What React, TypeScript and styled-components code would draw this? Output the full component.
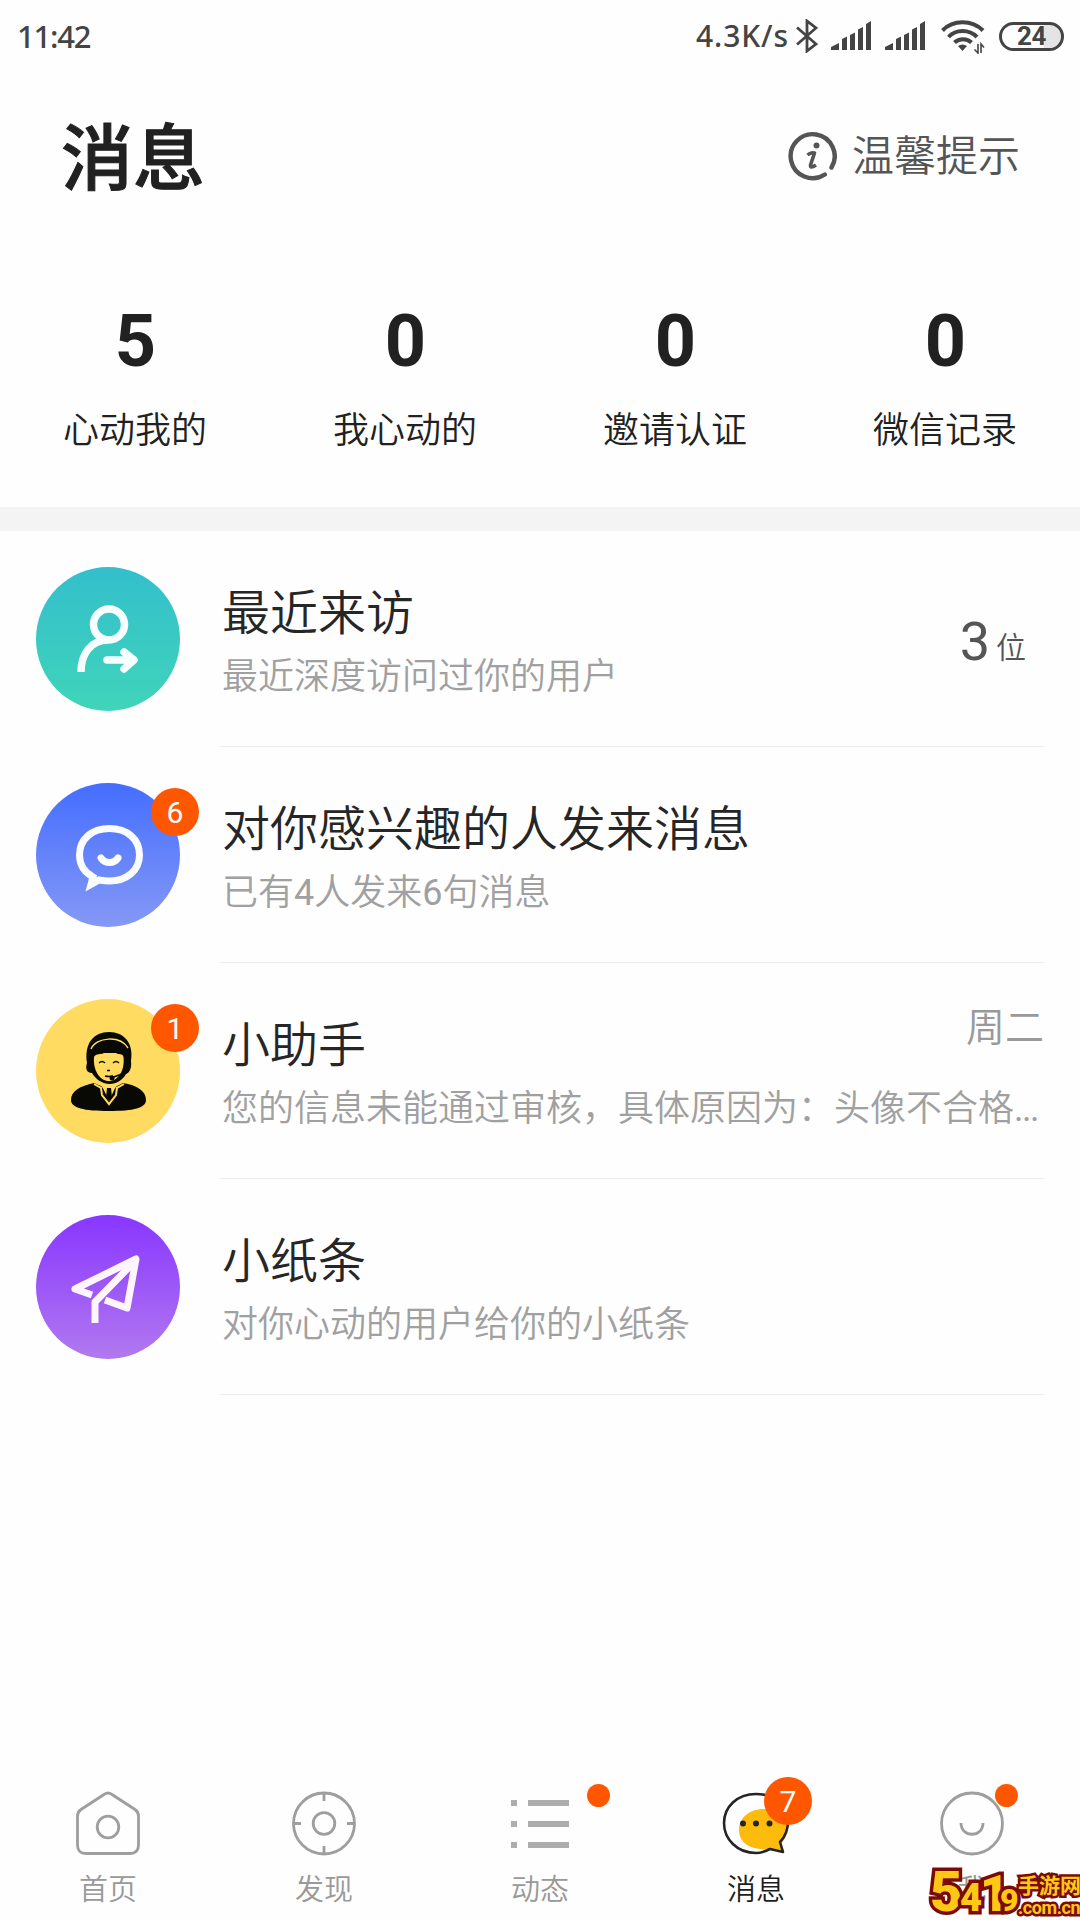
import React from "react";
import styled, { createGlobalStyle } from "styled-components";

const Global = createGlobalStyle`
  * { box-sizing: border-box; }
  body { margin: 0; background: #fefefe; }
`;

const Page = styled.div`
  width: 1080px;
  height: 1920px;
  display: flex;
  flex-direction: column;
  background: #fefefe;
  overflow: hidden;
  font-family: Roboto, "Noto Sans CJK SC", sans-serif;
  color: #212121;
`;

const StatusBar = styled.div`
  height: 72px;
  flex: none;
  display: flex;
  align-items: center;
  justify-content: space-between;
  padding: 0 16px 0 17px;
  color: #444;
  font: 500 31px/72px "Noto Sans", sans-serif;
`;
const Clock = styled.span`
  letter-spacing: -1.2px;
`;
const StatusRight = styled.div`
  display: flex;
  align-items: center;
  height: 72px;
`;
const Speed = styled.span`
  font-size: 30px;
  letter-spacing: 0.9px;
  margin-right: 7px;
`;
const StatusIcon = styled.svg<{ $gap?: number }>`
  display: block;
  margin-right: ${(p) => p.$gap ?? 0}px;
`;
const Battery = styled.div`
  width: 65px;
  height: 29px;
  border: 3px solid #444;
  border-radius: 15px;
  background: linear-gradient(90deg, #fefefe 72%, #e4e4e4 72%);
  display: flex;
  align-items: center;
  justify-content: center;
  font: 700 26px/24px Roboto, sans-serif;
  letter-spacing: -0.5px;
`;

const Header = styled.header`
  height: 168px;
  flex: none;
  display: flex;
  align-items: flex-start;
  justify-content: space-between;
  padding: 0 60px 0 61px;
`;
const Title = styled.h1`
  margin: 0;
  font: 500 72px/162px "Noto Sans CJK SC", sans-serif;
  -webkit-text-stroke: 1px #212121;
`;
const Tip = styled.div`
  display: flex;
  align-items: center;
  gap: 15px;
  height: 168px;
  font: 400 42px/60px "Noto Sans CJK SC", sans-serif;
  color: #555;
`;
const TipLabel = styled.span`
  padding-bottom: 6px;
  font-weight: 350;
`;

const Stats = styled.section`
  height: 267px;
  flex: none;
  display: grid;
  grid-template-columns: repeat(4, 1fr);
  padding-top: 60px;
`;
const Stat = styled.div`
  display: flex;
  flex-direction: column;
  align-items: center;
`;
const StatValue = styled.div`
  padding-left: 1px;
  font: 700 72px/84px Roboto, sans-serif;
`;
const StatLabel = styled.div`
  margin-top: 17px;
  font: 350 36px/52px "Noto Sans CJK SC", sans-serif;
`;
const Band = styled.div`
  height: 24px;
  flex: none;
  background: #f4f4f4;
`;

const List = styled.main`
  flex: 1;
`;
const Row = styled.div`
  height: 216px;
  display: flex;
  padding-left: 36px;
  padding-right: 36px;
`;
const Avatar = styled.div<{ $bg: string }>`
  position: relative;
  width: 144px;
  height: 144px;
  margin-top: 36px;
  border-radius: 50%;
  background: ${(p) => p.$bg};
  flex: none;
`;
const Badge = styled.span<{ $x: number; $y: number }>`
  position: absolute;
  left: ${(p) => p.$x}px;
  top: ${(p) => p.$y}px;
  width: 48px;
  height: 48px;
  border-radius: 50%;
  background: #ff5700;
  color: #fff;
  text-align: center;
  font: 400 30px/50px Roboto, sans-serif;
`;
const RowBody = styled.div`
  flex: 1;
  min-width: 0;
  margin-left: 40px;
  display: flex;
  border-bottom: 1px solid #ececec;
`;
const RowText = styled.div`
  flex: 1;
  min-width: 0;
  padding: 43px 6px 0 2px;
`;
const RowTitle = styled.div`
  font: 350 48px/70px "Noto Sans CJK SC", sans-serif;
  color: #262626;
`;
const RowSub = styled.div`
  margin-top: 3px;
  font: 350 36px/52px "Noto Sans CJK SC", sans-serif;
  color: #a0a0a0;
  white-space: nowrap;
`;
const Latin = styled.span<{ $spacing?: number }>`
  font-family: Roboto, sans-serif;
  font-weight: 400;
  letter-spacing: ${(p) => p.$spacing ?? 0}px;
`;
const Count = styled.div`
  padding: 75px 18px 0 0;
  font: 400 54px/72px Roboto, sans-serif;
  color: #555;
`;
const Unit = styled.span`
  margin-left: 6px;
  vertical-align: 2px;
  font: 350 30px/30px "Noto Sans CJK SC", sans-serif;
`;
const DayLine = styled.div`
  display: flex;
  justify-content: space-between;
`;
const Day = styled.span`
  margin: -12px -6px 0 0;
  font: 350 39px/60px "Noto Sans CJK SC", sans-serif;
  color: #999;
`;

const TabBar = styled.nav`
  position: relative;
  height: 156px;
  flex: none;
  display: grid;
  grid-template-columns: repeat(5, 1fr);
`;
const Tab = styled.div<{ $active?: boolean }>`
  position: relative;
  display: flex;
  flex-direction: column;
  align-items: center;
  padding-top: 20px;
  font: 350 29px/42px "Noto Sans CJK SC", sans-serif;
  color: ${(p) => (p.$active ? "#1c1c1c" : "#999")};
`;
const TabIcon = styled.svg`
  display: block;
  margin-bottom: 10px;
`;
const Dot = styled.i<{ $x: number }>`
  position: absolute;
  left: ${(p) => p.$x}px;
  top: 20px;
  width: 23px;
  height: 23px;
  border-radius: 50%;
  background: #ff5700;
`;

const Watermark = styled.div`
  position: absolute;
  right: 0;
  bottom: 0;
  width: 150px;
  height: 56px;
  display: flex;
  color: #ffc814;
  -webkit-text-stroke: 7px #7b0b08;
  paint-order: stroke fill;
  font-family: Roboto, "Noto Sans CJK SC", sans-serif;
  font-weight: 900;
  white-space: nowrap;
`;
const MarkNumber = styled.div`
  width: 88px;
  display: flex;
  align-items: baseline;
`;
const Digit = styled.span<{ $size: number; $w: number }>`
  width: ${(p) => p.$w}px;
  font-size: ${(p) => p.$size}px;
  line-height: 1;
`;
const MarkText = styled.div`
  display: flex;
  flex-direction: column;
  padding-top: 10px;
  -webkit-text-stroke-width: 5px;
  font-size: 21px;
  font-weight: 700;
  line-height: 24px;
`;
const MarkDomain = styled.span`
  font-size: 18px;
  line-height: 20px;
  letter-spacing: -0.4px;
`;

const Signal = ({ gap }: { gap: number }) => (
  <StatusIcon width="41" height="30" viewBox="0 0 41 30" fill="#444" $gap={gap}>
    <path d="M0 29v-3l8-4v7zM11 29V18l5-2.5V29zM19 29V14l5-2.5V29zM27 29V8.500l5-2.500V29zM35 29V3l5-3v29z" />
  </StatusIcon>
);

const VisitorIcon = () => (
  <svg width="144" height="144" viewBox="0 0 144 144" fill="none" stroke="#f6fffd" strokeWidth="7.500">
    <circle cx="73" cy="57.500" r="15.500" />
    <path d="M45 105C45 87 55 73 72 73" strokeLinecap="butt" />
    <path d="M71 93H97M88 85L98 93L88 102" strokeLinecap="round" strokeLinejoin="round" />
  </svg>
);
const ChatIcon = () => (
  <svg width="144" height="144" viewBox="0 0 144 144" fill="none" stroke="#fafcff" strokeWidth="7">
    <path d="M55 101.500L57 94C48 89 43.500 82 43.500 72C43.500 56 56 45.500 73.500 45.500S103.500 56 103.500 72S90 98 73.500 98C69 98 66 97.500 63 97Z" />
    <path d="M65 75C69 81 78 81 82 75" strokeLinecap="round" />
  </svg>
);
const AgentIcon = () => (
  <svg width="144" height="144" viewBox="0 0 144 144" fill="#080804">
    <path d="M51 64C48 44 58 33 73 33S98 44 95 62C96 70 93 74 90 75C87 81 80 85 74 85C65 85 59 79 56 74C51 74 49 70 51 64Z" />
    <path d="M58 58C60 54 65 56 68 54H80C82 56 87 54 87.500 58C89 72 82 82 73 82S57 72 58 58Z" fill="#ffdb5f" />
    <path d="M55 50C60 38 84 36 92 49" fill="none" stroke="#ffdb5f" strokeWidth="1.500" />
    <path d="M63 64Q66 61 69 64M77 64Q80 61 83 64M71 71.500H74M69 77Q73 78 77 77" fill="none" stroke="#080804" strokeWidth="1.300" />
    <path d="M75 79L86 75" stroke="#080804" strokeWidth="1.800" />
    <circle cx="76" cy="79" r="2.500" />
    <path d="M58 84C44 87 35 92 35 101C35 109 48 112 73 112S110 109 110 101C110 92 101 86 87 84L81 87L73 95L65 87Z" />
    <path d="M58 85L65 89L66 96L73 105L80 96L81 89L88 85" fill="none" stroke="#ffdb5f" strokeWidth="2" />
    <path d="M66 87H80L73 102Z" fill="#ffdb5f" />
    <path d="M71 89H75L76 98L73 102L70 98Z" />
  </svg>
);
const PlaneIcon = () => (
  <svg width="144" height="144" viewBox="0 0 144 144" fill="none" stroke="#fff5ff" strokeWidth="7" strokeLinejoin="round">
    <path d="M56 80L39 74L100 44L91 93L69 85" />
    <path d="M59 108V87L98 47" />
  </svg>
);

const stats = [
  ["5", "心动我的"],
  ["0", "我心动的"],
  ["0", "邀请认证"],
  ["0", "微信记录"],
];

export default function App() {
  return (
    <Page>
      <Global />
      <StatusBar>
        <Clock>11:42</Clock>
        <StatusRight>
          <Speed>4.3K/s</Speed>
          <StatusIcon width="22" height="34" viewBox="0 0 22 34" fill="none" stroke="#444" strokeWidth="2.800" $gap={13}>
            <path d="M1 8.500L20 25L11 32V2L20 9L1 25.500" />
          </StatusIcon>
          <Signal gap={13} />
          <Signal gap={15} />
          <StatusIcon width="44" height="36" viewBox="0 0 44 36" fill="none" stroke="#444" strokeWidth="4" $gap={14}>
            <path d="M1.500 12.500C12 1.500 31 1.500 42 12.500M7.500 19C15 11 28 11 36 19M13.500 24.500C18 20 26 20 30.500 24.500" />
            <path d="M17 28Q21.500 25 26 28L21.500 33Z" fill="#444" stroke="none" />
            <path d="M37 26V35L33.500 31.500M40 35V26L43 29.500" strokeWidth="1.600" />
          </StatusIcon>
          <Battery>24</Battery>
        </StatusRight>
      </StatusBar>

      <Header>
        <Title>消息</Title>
        <Tip>
          <svg width="50" height="50" viewBox="0 0 50 50" fill="none" stroke="#555" strokeWidth="4.400">
            <path d="M37.800 43.500A22 22 0 1 1 44.500 36.500" strokeLinecap="round" />
            <circle cx="29.500" cy="14.500" r="3" fill="#555" stroke="none" />
            <path d="M20.500 24Q24 21 27.500 22L23.500 34Q23 38 29 34" strokeWidth="3.600" strokeLinejoin="round" />
          </svg>
          <TipLabel>温馨提示</TipLabel>
        </Tip>
      </Header>

      <Stats>
        {stats.map(([value, label]) => (
          <Stat key={label}>
            <StatValue>{value}</StatValue>
            <StatLabel>{label}</StatLabel>
          </Stat>
        ))}
      </Stats>
      <Band />

      <List>
        <Row>
          <Avatar $bg="linear-gradient(#33bfcc, #40d4ba)"><VisitorIcon /></Avatar>
          <RowBody>
            <RowText>
              <RowTitle>最近来访</RowTitle>
              <RowSub>最近深度访问过你的用户</RowSub>
            </RowText>
            <Count>3<Unit>位</Unit></Count>
          </RowBody>
        </Row>
        <Row>
          <Avatar $bg="linear-gradient(#446eff, #8598f5)">
            <ChatIcon />
            <Badge $x={115} $y={5}>6</Badge>
          </Avatar>
          <RowBody>
            <RowText>
              <RowTitle>对你感兴趣的人发来消息</RowTitle>
              <RowSub>已有<Latin>4</Latin>人发来<Latin>6</Latin>句消息</RowSub>
            </RowText>
          </RowBody>
        </Row>
        <Row>
          <Avatar $bg="#ffdb62">
            <AgentIcon />
            <Badge $x={115} $y={5}>1</Badge>
          </Avatar>
          <RowBody>
            <RowText>
              <DayLine>
                <RowTitle>小助手</RowTitle>
                <Day>周二</Day>
              </DayLine>
              <RowSub>您的信息未能通过审核，具体原因为：头像不合格<Latin $spacing={-1.5}>...</Latin></RowSub>
            </RowText>
          </RowBody>
        </Row>
        <Row>
          <Avatar $bg="linear-gradient(#8836ff, #b179ef)"><PlaneIcon /></Avatar>
          <RowBody>
            <RowText>
              <RowTitle>小纸条</RowTitle>
              <RowSub>对你心动的用户给你的小纸条</RowSub>
            </RowText>
          </RowBody>
        </Row>
      </List>

      <TabBar>
        <Tab>
          <TabIcon width="72" height="72" viewBox="0 0 72 72" fill="none" stroke="#9e9e9e" strokeWidth="2.800">
            <path d="M32 10.500Q36 7.500 40 10.500L63 25.500Q66.500 28 66.500 32V61Q66.500 69.500 58 69.500H14Q5.500 69.500 5.500 61V32Q5.500 28 9 25.500Z" />
            <circle cx="36" cy="43" r="10.800" />
          </TabIcon>
          首页
        </Tab>
        <Tab>
          <TabIcon width="72" height="72" viewBox="0 0 72 72" fill="none" stroke="#9e9e9e" strokeWidth="2.800">
            <circle cx="36" cy="39.500" r="30.500" />
            <circle cx="36" cy="39.500" r="10.800" />
            <path d="M36 9V17M36 62V70M5 39.500H13M59 39.500H67" />
          </TabIcon>
          发现
        </Tab>
        <Tab>
          <TabIcon width="72" height="72" viewBox="0 0 72 72" fill="#adadad">
            <path d="M7 16h6v6H7zM24 16h41v6H24zM7 37h6v6H7zM24 37h41v6H24zM7 58h6v6H7zM24 58h41v6H24z" />
          </TabIcon>
          <Dot $x={155} />
          动态
        </Tab>
        <Tab $active>
          <TabIcon width="72" height="72" viewBox="0 0 72 72">
            <path d="M61 60C71 50 70 25 44 25C29 25 19 34 19 46C19 59 31 67 51 65L64 68Z" fill="#fdbc0c" />
            <path d="M68 37C66 20 54 10 36 10C17 10 4 23 4 39S17 69 36 69C42 69 46 67 50 65L63 68L60 58C66 52 68 46 68 37Z" fill="none" stroke="#242424" strokeWidth="2.600" strokeLinejoin="round" />
            <g fill="#242424"><circle cx="23" cy="39.500" r="3" /><circle cx="36" cy="39.500" r="3" /><circle cx="49.500" cy="39.500" r="3" /></g>
          </TabIcon>
          <Badge $x={116} $y={13}>7</Badge>
          消息
        </Tab>
        <Tab>
          <TabIcon width="72" height="72" viewBox="0 0 72 72" fill="none" stroke="#9e9e9e" strokeWidth="2.800">
            <circle cx="36" cy="39.500" r="30.500" />
            <path d="M25 39C25 54 47 54 47 39" />
          </TabIcon>
          <Dot $x={131} />
          我
        </Tab>
        <Watermark>
          <MarkNumber>
            <Digit $size={56} $w={30}>5</Digit>
            <Digit $size={38} $w={20}>4</Digit>
            <Digit $size={50} $w={20}>1</Digit>
            <Digit $size={32} $w={18}>9</Digit>
          </MarkNumber>
          <MarkText>
            <span>手游网</span>
            <MarkDomain>.com.cn</MarkDomain>
          </MarkText>
        </Watermark>
      </TabBar>
    </Page>
  );
}
